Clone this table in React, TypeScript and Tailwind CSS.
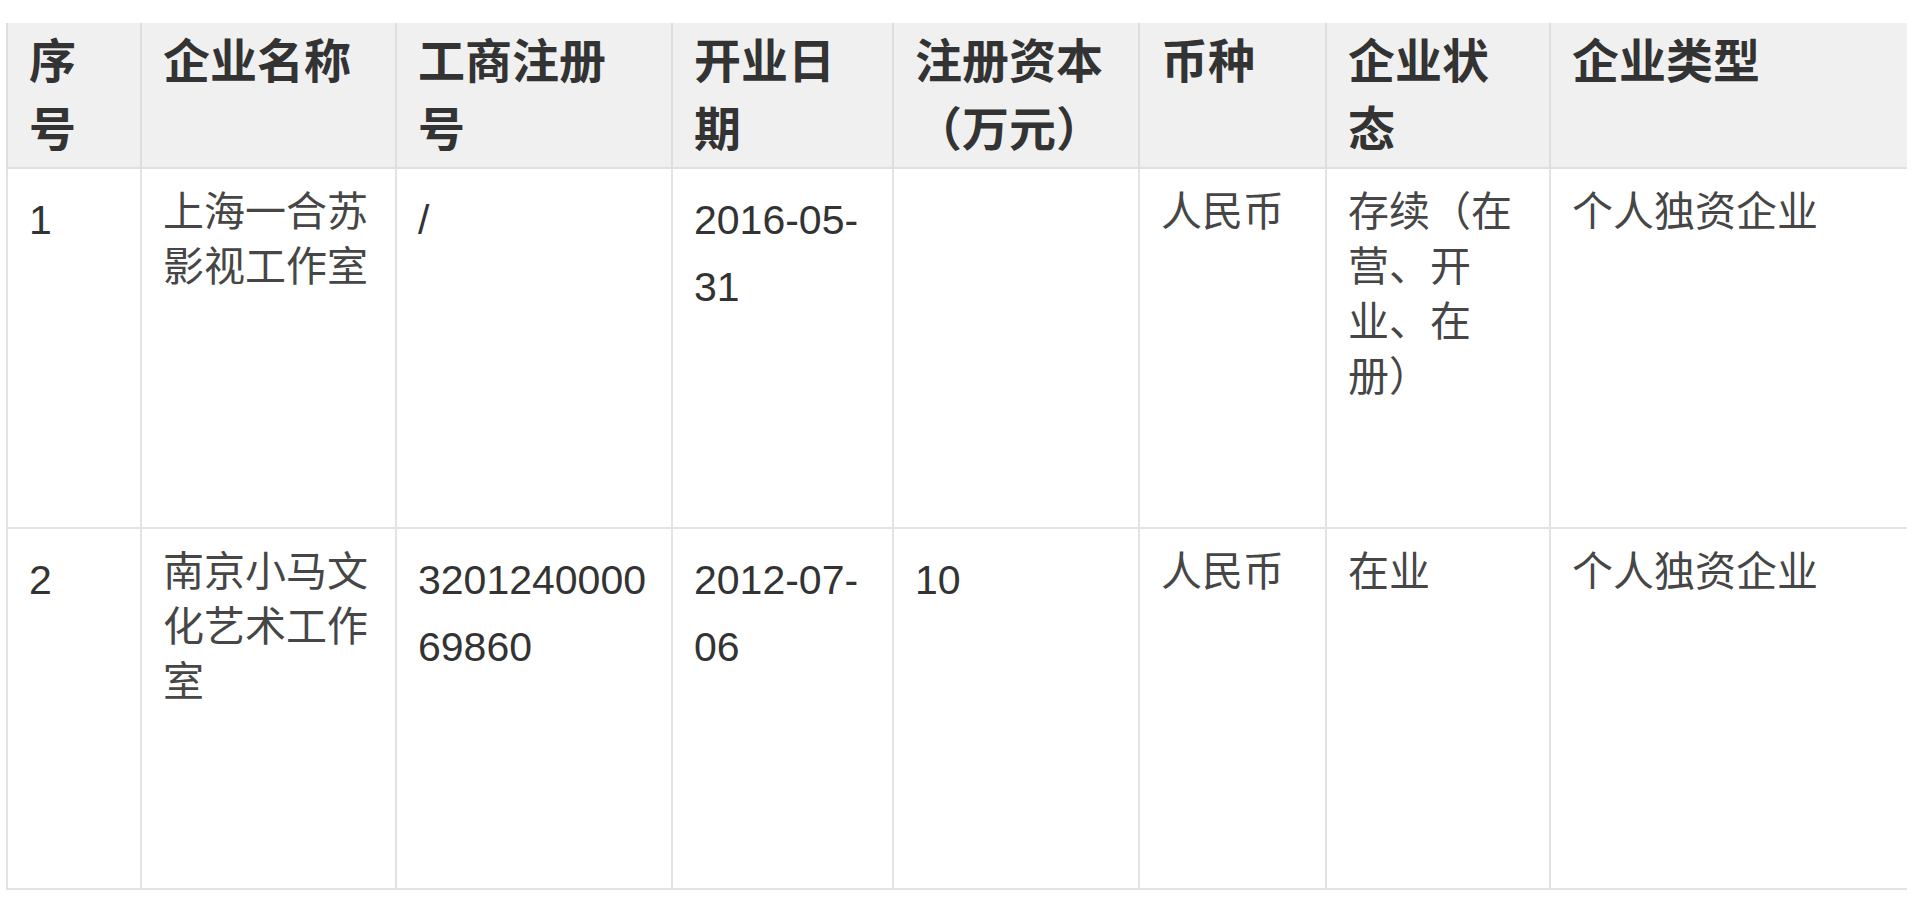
type Row = {
  no: string;
  name: string;
  reg: string;
  date: string;
  capital: string;
  currency: string;
  status: string;
  kind: string;
};

const headers = ["序号", "企业名称", "工商注册号", "开业日期", "注册资本（万元）", "币种", "企业状态", "企业类型"];

const rows: Row[] = [
  {
    no: "1",
    name: "上海一合苏影视工作室",
    reg: "/",
    date: "2016-05-31",
    capital: "",
    currency: "人民币",
    status: "存续（在营、开业、在册）",
    kind: "个人独资企业"
  },
  {
    no: "2",
    name: "南京小马文化艺术工作室",
    reg: "320124000069860",
    date: "2012-07-06",
    capital: "10",
    currency: "人民币",
    status: "在业",
    kind: "个人独资企业"
  }
];

const font = "font-['Liberation_Sans','Noto_Sans_CJK_SC',sans-serif] [text-spacing-trim:space-all]";

// numbers sit on a taller line than the chinese text in the source page
function NumCell({ children, breakAll }: { children: string; breakAll?: boolean }) {
  return (
    <div
      className={`border-b-2 border-l-2 border-[#e3e3e3] px-[21px] pt-[18px] text-[41px] leading-[67px] text-[#333] ${
        breakAll ? "break-all" : ""
      }`}
    >
      {children}
    </div>
  );
}

function TextCell({ children }: { children: string }) {
  return (
    <div className="border-b-2 border-l-2 border-[#e3e3e3] px-[21px] pt-[16px] text-[41px] leading-[55px] text-[#464646]">
      {children}
    </div>
  );
}

export default function App() {
  return (
    <div className={`min-h-screen bg-white pl-[6px] pt-[23px] ${font}`}>
      <div className="grid grid-cols-[134px_255px_276px_221px_246px_187px_224px_358px] grid-rows-[146px_360px_361px]">
        {headers.map((h) => (
          <div
            key={h}
            className="border-b-2 border-l-2 border-b-[#e0e0e0] border-l-[#dedede] bg-[#f0f0f0] px-[21px] pt-[5px] text-[47px] font-bold leading-[68px] text-[#333]"
          >
            {h}
          </div>
        ))}
        {rows.map((r) => [
          <NumCell key={r.no + "no"}>{r.no}</NumCell>,
          <TextCell key={r.no + "name"}>{r.name}</TextCell>,
          <NumCell key={r.no + "reg"} breakAll>
            {r.reg}
          </NumCell>,
          <NumCell key={r.no + "date"}>{r.date}</NumCell>,
          <NumCell key={r.no + "cap"}>{r.capital}</NumCell>,
          <TextCell key={r.no + "cur"}>{r.currency}</TextCell>,
          <TextCell key={r.no + "status"}>{r.status}</TextCell>,
          <TextCell key={r.no + "kind"}>{r.kind}</TextCell>
        ])}
      </div>
    </div>
  );
}
